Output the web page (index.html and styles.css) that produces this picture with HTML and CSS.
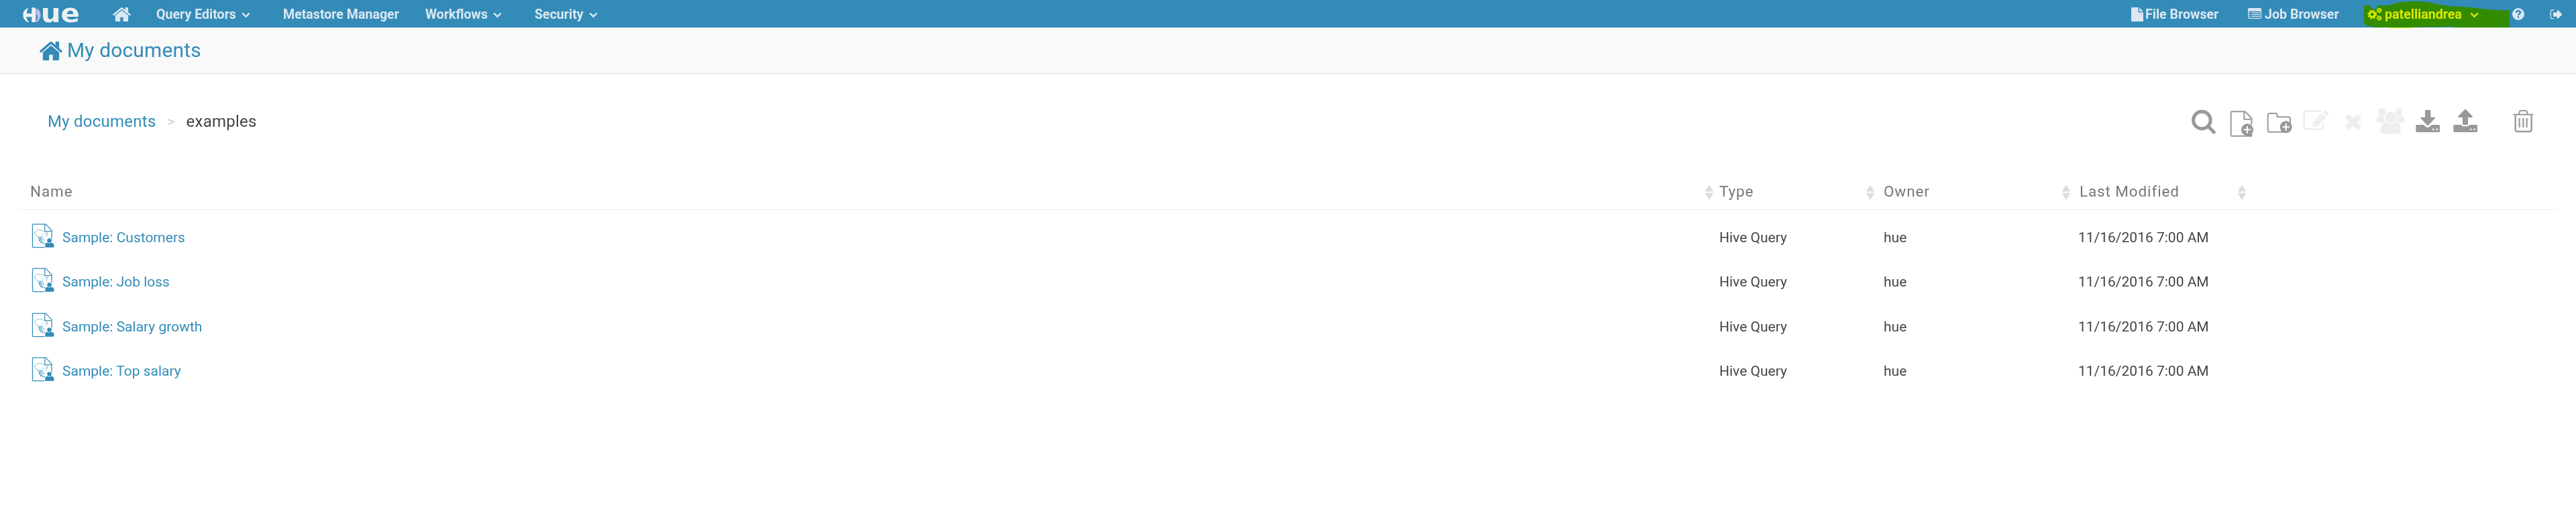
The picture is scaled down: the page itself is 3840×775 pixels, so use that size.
FILE: index.html
```html
<!DOCTYPE html>
<html lang="en">
<head>
<meta charset="utf-8">
<title>Hue - My documents</title>
<link rel="stylesheet" href="styles.css">
</head>
<body>
<svg class="defs" width="0" height="0" aria-hidden="true">
  <symbol id="home" viewBox="89 253 1614 1283" preserveAspectRatio="none"><path d="M1472 992v480q0 26-19 45t-45 19h-384v-384h-256v384h-384q-26 0-45-19t-19-45v-480q0-1 .5-3t.5-3l575-474 575 474q1 2 1 6zm223-69l-62 74q-8 9-21 11h-3q-13 0-21-7l-692-577-692 577q-12 8-24 7-13-2-21-11l-62-74q-8-10-7-23.5t11-21.5l719-599q32-26 76-26t76 26l244 204v-195q0-14 9-23t23-9h192q14 0 23 9t9 23v408l219 182q10 8 11 21.5t-7 23.5z"/></symbol>
  <symbol id="chevron" viewBox="0 0 13 9"><path d="M1.3 1.6l5.2 5.2 5.2-5.2" fill="none" stroke="currentColor" stroke-width="2.4"/></symbol>
  <symbol id="sort" viewBox="0 0 14 24"><path d="M7 .5L13.5 10.6H.5zM7 23L.5 12.6h13z"/></symbol>
  <symbol id="hive" viewBox="142 250 102 112">
    <g fill="none" stroke="currentColor">
      <path stroke-width="3.800" d="M200 357.500H149q-3 0-3-3V256.500q0-3 3-3h57l26.500 28V318M201.500 254v31.500H232"/>
      <path stroke-width="2" d="M154 293c2-7 9-7 12-12 6-4 12-1 17-1 6 1 13 3 17 8M154 293l6 5 3 8 9 4 5-3M203 290l7 8-4 7 6 6M190 298l6 5M213 290l1 14" stroke-dasharray="9 2"/>
      <path stroke-width="3" d="M175 311c-1 12 4 23 19 30M182 309c0 10 3 19 13 25M189 308c0 8 3 14 11 18M173 318l8-3M175 328l10-5M181 337l9-6M194 341l9-2"/>
    </g>
    <circle cx="222" cy="327" r="10"/>
    <path d="M203 358v-9q0-11 11-12 8 4 16 0 13 1 13 12v6q0 3-3 3z"/>
  </symbol>
</svg>

<header class="navbar">
  <svg class="logo" viewBox="102 30 252 72">
    <path fill="#eef0f1" d="M129 34q-26 10-26 33 0 21 20 32h7q-12-12-12-23h24v23h14q4-2 4-8V43q0-8-6-9h-12v27h-22q0-17 9-27z"/>
    <path fill="#c8b8ea" d="M162 37q20 9 20 30 0 20-17 31h-7q10-8 10-22-1-10-6-13z"/>
    <path fill="#338bb8" d="M166 47l3 3-3 3z"/>
    <text x="182" y="99" font-size="114" textLength="175" lengthAdjust="spacingAndGlyphs">ue</text>
  </svg>
  <nav class="menu">
    <a class="item home"><svg class="home-icon"><use href="#home"/></svg></a>
    <a class="item editors">Query Editors<svg class="chev"><use href="#chevron"/></svg></a>
    <a class="item metastore">Metastore Manager</a>
    <a class="item workflows">Workflows<svg class="chev"><use href="#chevron"/></svg></a>
    <a class="item">Security<svg class="chev"><use href="#chevron"/></svg></a>
  </nav>
  <nav class="menu right">
    <a class="item files"><svg class="file-icon" viewBox="128 0 1536 1792" preserveAspectRatio="none"><path d="M1152 512v-472q22 14 36 28l408 408q14 14 28 36h-472zm-128 32q0 40 28 68t68 28h544v1056q0 40-28 68t-68 28h-1344q-40 0-68-28t-28-68v-1600q0-40 28-68t68-28h800v544z"/></svg>File Browser</a>
    <a class="item jobs"><svg class="job-icon" viewBox="0 0 20 16"><path fill="none" stroke="currentColor" stroke-width="1.300" d="M.7 3V14q0 1.300 1.300 1.300H18q1.300 0 1.300-1.300V3"/><path d="M0 4.700V2Q0 0 2 0H18Q20 0 20 2V4.700z"/><path d="M2.700 6.200h1.500v1.200H2.700zM2.700 9h1.500v1.200H2.700zM2.700 11.800h1.500V13H2.700zM5.500 6.200h12v1.200h-12zM5.500 9h12v1.200h-12zM5.500 11.800h12V13h-12z"/></svg>Job Browser</a>
    <a class="item user"><svg class="gears-icon" viewBox="147 32 67 62"><g fill="none" stroke="currentColor"><circle cx="169" cy="63" r="12" stroke-width="9"/><circle cx="169" cy="63" r="18.500" stroke-width="6" stroke-dasharray="7.300 7.230"/><circle cx="201" cy="45" r="6" stroke-width="5"/><circle cx="201" cy="45" r="10" stroke-width="4" stroke-dasharray="4.500 3.350"/><circle cx="201" cy="80" r="6" stroke-width="5"/><circle cx="201" cy="80" r="10" stroke-width="4" stroke-dasharray="4.500 3.350"/></g></svg>patelliandrea<svg class="chev"><use href="#chevron"/></svg></a>
    <a class="item help"><svg class="help-icon" viewBox="0 0 18 18"><circle cx="9" cy="9" r="9"/><path fill="none" stroke="#338bb8" stroke-width="2.400" d="M5.800 6.700Q6.400 4.300 9 4.300q3 0 3 2.300 0 1.300-1.500 2.200Q9 9.600 9 11"/><path fill="#338bb8" d="M7.700 12.300h2.500v2.400H7.700z"/></svg></a>
    <a class="item"><svg class="out-icon" viewBox="962 40 56 46"><path fill="none" stroke="currentColor" stroke-width="4" d="M979 43H970q-5 0-5 5V77q0 5 5 5h9"/><path d="M976 54h18V43q1-2 4 0l19 19q1 1 0 2L998 82q-3 2-4 0V73H978q-2 0-2-3z"/></svg></a>
  </nav>
  <svg class="marker" viewBox="132 0 651 126"><path d="M132 24H158L165 36 172 40H188L192 24H240L262 18 285 12 310 9 340 6H385L430 12 470 21 520 28 580 31 640 37 705 44 783 46V123H540L510 118 480 121H420L348 123V126H243V123H183L165 118 145 116 135 109 132 104z"/></svg>
</header>

<div class="titlebar"><svg class="title-icon"><use href="#home"/></svg><h1>My documents</h1></div>

<main>
  <div class="toolbar">
    <div class="crumbs"><a>My documents</a><span class="sep">&gt;</span><span>examples</span></div>
    <div class="actions">
      <svg class="search" viewBox="84 60 108 126"><circle cx="130" cy="117" r="38.500" fill="none" stroke="currentColor" stroke-width="15"/><path d="M158 145l26 26" stroke="currentColor" stroke-width="15" stroke-linecap="round"/></svg>
      <svg class="new-file" viewBox="254 60 108 126"><path fill="none" stroke="currentColor" stroke-width="6" d="M352 188H262q-3 0-3-3V82q0-3 3-3h60l29 29v30M318 80v33h33"/><circle cx="332" cy="160" r="27"/><path d="M345 176h9v14h-22z"/><path stroke="#fff" stroke-width="6" d="M332 144v32M316 160h32"/></svg>
      <svg class="new-folder" viewBox="418 60 114 126"><path fill="none" stroke="currentColor" stroke-width="6" d="M500 170H432q-9 0-9-9V96q0-9 9-9h24q9 0 9 9v7h49q9 0 9 9v22"/><circle cx="504" cy="148" r="27"/><path stroke="#fff" stroke-width="6" d="M504 132v32M488 148h32"/></svg>
      <svg class="edit off" viewBox="581 60 117 126"><path fill="none" stroke="currentColor" stroke-width="8" stroke-linecap="round" d="M659 77H600q-14 0-14 14v53q0 14 14 14h58q14 0 14-14V132"/><path d="M624 127l41-41 20 20-41 41h-20zM669 82l7-7q5-5 10 0l9 9q5 5 0 10l-7 7z"/><path stroke="#fff" stroke-width="3" d="M637 124l29-29M630 133l8 8"/></svg>
      <svg class="remove off" viewBox="765 60 84 126"><path stroke="currentColor" stroke-width="24" stroke-linejoin="round" d="M779 98l56 56M835 98l-56 56"/></svg>
      <svg class="users off" viewBox="70 60 129 126"><circle cx="97" cy="80" r="17"/><circle cx="172" cy="80" r="17"/><path d="M84 97q12 6 22 1-1 20 8 30H86q-14 0-14-10 1-20 12-21zM184 97q-12 6-22 1 1 20-8 30h28q14 0 14-10-1-20-12-21z"/><circle cx="135" cy="105" r="26" stroke="#fff" stroke-width="3"/><path d="M113 124q22 14 44 0 24 3 24 38 0 18-18 18h-56q-18 0-18-18 0-34 24-38z" stroke="#fff" stroke-width="3"/></svg>
      <svg class="download" viewBox="247 60 111 126"><path d="M289 72h25v32h17q6 0 3 4l-30 32q-3 2-6 0l-29-32q-3-4 3-4h17z"/><path fill-rule="evenodd" d="M248 142q0-4 4-4h30l12 9q7 6 14 0l11-9h32q4 0 4 4v25q0 4-4 4h-99q-4 0-4-4zM322 155v7h7v-7zM339 155v7h7v-7z"/></svg>
      <svg class="upload" viewBox="414 60 111 126"><path d="M456 138v-33h-18q-5-1-2-5l29-30q3-2 6 0l29 30q3 4-2 5h-18v33z"/><path fill-rule="evenodd" d="M415 142q0-4 4-4h30l7 7h24l7-7h31q4 0 4 4v25q0 4-4 4h-99q-4 0-4-4zM489 155v7h7v-7zM505 155v7h7v-7z"/></svg>
      <svg class="trash" viewBox="680 60 93 126"><path fill="none" stroke="currentColor" stroke-width="6" d="M681 92h90M706 91l3-11q2-5 6-5h22q4 0 6 5l3 11"/><path fill="none" stroke="currentColor" stroke-width="7" d="M691 94v65q0 9 8 9h56q8 0 8-9V94"/><path stroke="currentColor" stroke-width="6.500" d="M709 108v42M726 108v42M742 108v42"/></svg>
    </div>
  </div>

  <div class="table">
    <div class="row head"><div>Name<svg class="sort"><use href="#sort"/></svg></div><div>Type<svg class="sort"><use href="#sort"/></svg></div><div>Owner<svg class="sort"><use href="#sort"/></svg></div><div>Last Modified<svg class="sort"><use href="#sort"/></svg></div></div>
    <div class="row first"><div><svg class="doc"><use href="#hive"/></svg><a>Sample: Customers</a></div><div>Hive Query</div><div>hue</div><div>11/16/2016 7:00 AM</div></div>
    <div class="row"><div><svg class="doc"><use href="#hive"/></svg><a>Sample: Job loss</a></div><div>Hive Query</div><div>hue</div><div>11/16/2016 7:00 AM</div></div>
    <div class="row"><div><svg class="doc"><use href="#hive"/></svg><a>Sample: Salary growth</a></div><div>Hive Query</div><div>hue</div><div>11/16/2016 7:00 AM</div></div>
    <div class="row"><div><svg class="doc"><use href="#hive"/></svg><a>Sample: Top salary</a></div><div>Hive Query</div><div>hue</div><div>11/16/2016 7:00 AM</div></div>
  </div>
</main>
</body>
</html>
```
FILE: styles.css
```css
* { box-sizing: border-box; }
body { margin: 0; background: #fff; color: #444; font: 21px Roboto, sans-serif; }
svg { display: block; flex: none; fill: currentColor; overflow: visible; }
.defs { position: absolute; }
a { color: #338bb8; }

.navbar { position: relative; display: flex; height: 41px; padding-left: 34px; background: #338bb8; }
.logo { width: 84px; height: 24px; margin: 10px 50px 0 0; }
.logo text { font-family: "DejaVu Sans", sans-serif; font-weight: bold; fill: #eef0f1; }
.menu { display: flex; }
.menu.right { margin-left: auto; }
.item { display: flex; align-items: center; height: 41px; padding-top: 1px; color: #dbe8f2; font-size: 19.6px; font-weight: 700; white-space: nowrap; }
.home { width: 65px; }
.editors { width: 189px; }
.metastore { width: 212px; }
.workflows { width: 163px; }
.home-icon { width: 27px; height: 21px; }
.chev { width: 13px; height: 9px; margin: 3px 0 0 8px; }
.files { width: 174px; }
.file-icon { width: 18px; height: 21px; margin-right: 3px; }
.jobs { width: 178px; }
.job-icon { width: 20px; height: 16px; margin: 0 5px 2px 0; }
.user { width: 216px; }
.gears-icon { width: 22px; height: 21px; margin-right: 4px; }
.user .chev { margin-left: 12px; }
.help { width: 56px; }
.help-icon { width: 18px; height: 18px; }
.out-icon { width: 19px; height: 15px; margin-right: 20px; }
.marker { position: absolute; left: 3524px; top: 0; width: 217px; height: 42px; fill: #ff0; mix-blend-mode: multiply; }

.titlebar { display: flex; align-items: center; height: 69px; padding: 1px 0 0 59px; background: #f9f9f9; border-bottom: 1px solid #ddd; color: #338bb8; }
.title-icon { width: 34px; height: 28px; margin-right: 7px; }
h1 { margin: 0 0 2px; font-size: 30px; font-weight: 400; letter-spacing: .13px; }

.toolbar { display: flex; justify-content: space-between; align-items: center; height: 141px; padding: 1px 63px 0 71px; }
.crumbs { display: flex; align-items: center; font-size: 24px; letter-spacing: .25px; }
.sep { margin: 0 17px; color: #ccc; font-size: 21px; letter-spacing: 0; }
.actions { display: flex; color: #999; }
.actions svg { height: 42px; }
.actions .off { color: #eee; }
.search { width: 36px; margin-right: 21px; }
.new-file { width: 36px; margin-right: 19px; }
.new-folder { width: 38px; margin-right: 16px; }
.edit { width: 39px; margin-right: 22px; }
.remove { width: 28px; margin-right: 20px; }
.users { width: 43px; margin-right: 16px; }
.download { width: 37px; margin-right: 19px; }
.upload { width: 37px; margin-right: 52px; }
.trash { width: 31px; }

.table { margin: 0 30px; }
.row { display: grid; grid-template-columns: 2525px 240px 292px 262px; height: 66.3px; align-items: center; }
.row > div { display: flex; align-items: center; padding-left: 8px; }
.row > div:first-child { padding-left: 17px; }
.row > div:nth-child(3) { padding-left: 13px; }
.row > div:nth-child(4) { padding-left: 11px; }
.head { height: 62px; padding-top: 6px; border-bottom: 1px solid #eee; color: #777; font-size: 22.5px; letter-spacing: .88px; }
.head > div { justify-content: space-between; }
.row.head > div:first-child { padding-left: 15px; }
.row.head > div:nth-child(4) { padding-left: 13px; }
.first { margin-top: 8px; }
.sort { width: 14px; height: 24px; margin-top: 4px; color: #ddd; }
.doc { width: 34px; height: 37px; margin: -5px 12px 0 0; color: #338bb8; }
```
